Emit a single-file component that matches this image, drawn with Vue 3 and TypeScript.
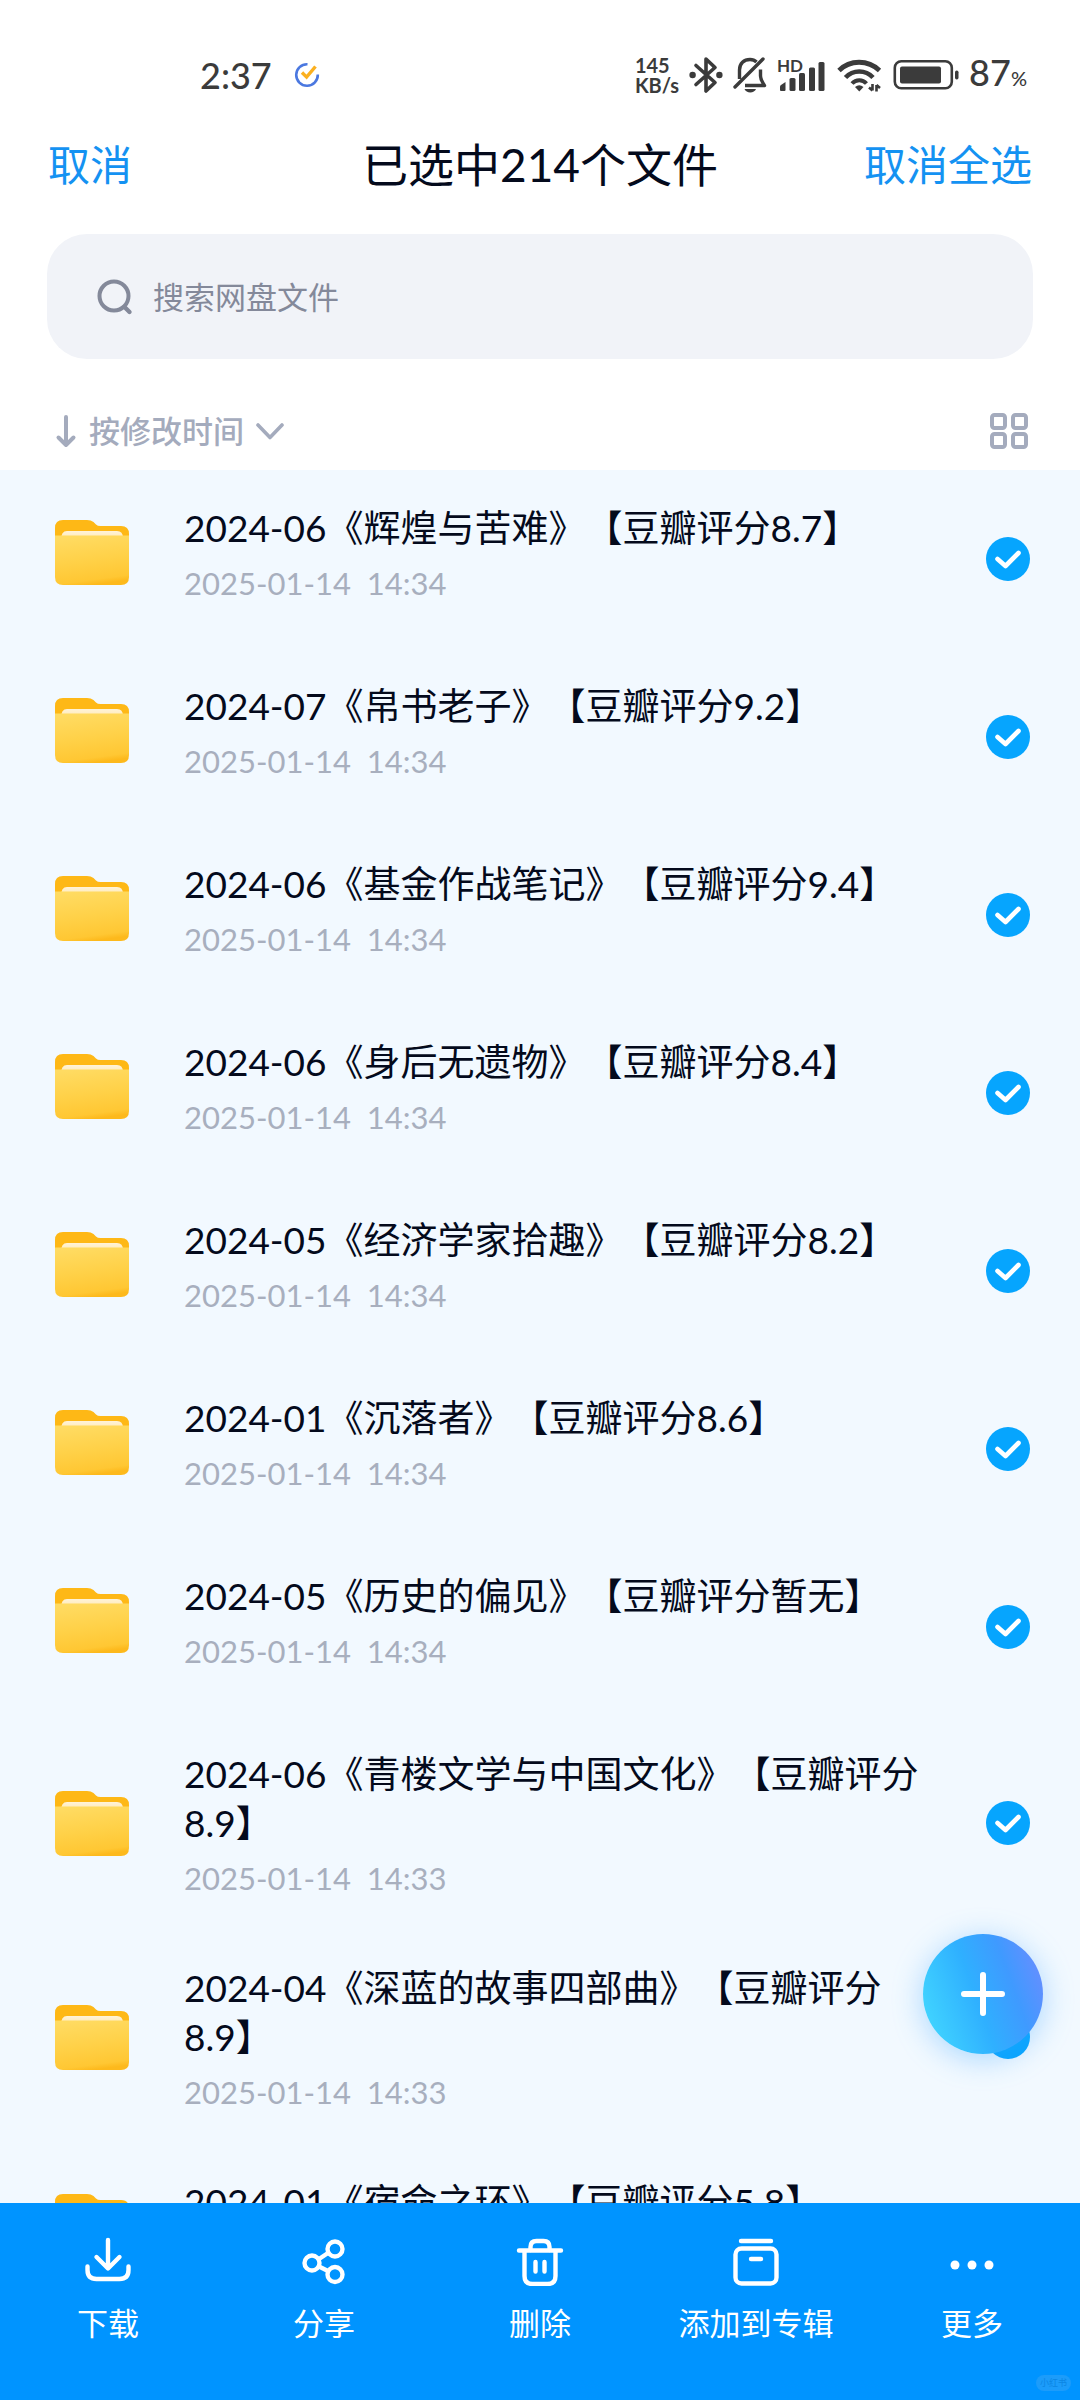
<script setup lang="ts">
import { computed, ref } from 'vue'

interface FileRow {
  id: number
  name: string
  time: string
  checked: boolean
}

const names: [string, string][] = [
  ['2024-06《辉煌与苦难》【豆瓣评分8.7】', '2025-01-14  14:34'],
  ['2024-07《帛书老子》【豆瓣评分9.2】', '2025-01-14  14:34'],
  ['2024-06《基金作战笔记》【豆瓣评分9.4】', '2025-01-14  14:34'],
  ['2024-06《身后无遗物》【豆瓣评分8.4】', '2025-01-14  14:34'],
  ['2024-05《经济学家拾趣》【豆瓣评分8.2】', '2025-01-14  14:34'],
  ['2024-01《沉落者》【豆瓣评分8.6】', '2025-01-14  14:34'],
  ['2024-05《历史的偏见》【豆瓣评分暂无】', '2025-01-14  14:34'],
  ['2024-06《青楼文学与中国文化》【豆瓣评分8.9】', '2025-01-14  14:33'],
  ['2024-04《深蓝的故事四部曲》【豆瓣评分8.9】', '2025-01-14  14:33'],
  ['2024-01《宿命之环》【豆瓣评分5.8】', '2025-01-14  14:33'],
]

const files = ref<FileRow[]>(
  names.map(([name, time], i) => ({ id: i + 1, name, time, checked: true })),
)
const keyword = ref('')

// Files selected further down the list that are not loaded yet
const selectedElsewhere = 204
const selectedCount = computed(
  () => selectedElsewhere + files.value.filter((f) => f.checked).length,
)
</script>

<template>
  <div class="screen">
    <header class="top">
      <div class="status">
        <span class="clock">2:37</span>
        <svg class="todo" width="26" height="26" viewBox="0 0 26 26" fill="none">
          <path d="M13.5 2.2A10.8 10.8 0 1 0 23.8 12.5" stroke="#4b78e0" stroke-width="2.6" />
          <path d="M8 10.5l4.6 4.6L21.5 4.5" stroke="#fbb01f" stroke-width="3.4" />
        </svg>
        <div class="status-right">
          <span class="speed">145<br />KB/s</span>
          <svg width="34" height="38" viewBox="0 0 34 38" fill="none">
            <path d="M7 9.5L26 26.5L17 35V3L26 11.5L7 28.5" stroke="#3b3b3b" stroke-width="3.6" stroke-linejoin="round" stroke-linecap="round" />
            <circle cx="3.6" cy="19" r="3.2" fill="#3b3b3b" />
            <circle cx="30.4" cy="19" r="3.2" fill="#3b3b3b" />
          </svg>
          <svg width="34" height="38" viewBox="0 0 34 38" fill="none" stroke="#3b3b3b" stroke-width="3.4">
            <path d="M2 31L30 3" stroke-linecap="round" />
            <path d="M6.5 23V14C6.5 7.5 11 3.5 17 3.5C20 3.5 22 4.5 23.5 6" />
            <path d="M27.5 13.5V20C27.5 24 29.5 26 31.5 29.5H12" stroke-linejoin="round" />
            <path d="M11.5 33H23C21.5 37.5 13 37.5 11.500 33z" fill="#3b3b3b" stroke="none" />
          </svg>
          <svg width="50" height="42" viewBox="0 -3 50 42" fill="#3b3b3b">
            <text x="0" y="15" class="hd">HD</text>
            <path d="M3 33V29.5Q3 28.7 4 28L8.5 25V33Q8.5 34 7.5 34H4Q3 34 3 33z" />
            <rect x="12.5" y="21" width="6" height="13" rx="1.5" />
            <rect x="22" y="16" width="6" height="18" rx="1.5" />
            <rect x="32" y="10.5" width="6" height="23.5" rx="1.5" />
            <rect x="41.5" y="5" width="6" height="29" rx="1.5" />
          </svg>
          <svg width="46" height="36" viewBox="0 0 46 36" fill="none" stroke="#3b3b3b">
            <path d="M2 13.5C13 2.5 31 2.5 42.5 13.5" stroke-width="4.8" />
            <path d="M8.5 20.5C16 12.5 28.5 12.5 36 20.5" stroke-width="4.6" />
            <path d="M15 26.5C19 22 25.5 22 29.5 26.5" stroke-width="4" />
            <path d="M18 30Q22.3 26.5 26.5 30L22.3 34.5z" fill="#3b3b3b" stroke="none" />
            <path d="M35.5 27V33.5M35.5 33.5L32 30.5M39.5 34.5V28M39.5 28L43 31" stroke-width="2.6" />
          </svg>
          <svg width="66" height="32" viewBox="0 0 66 32">
            <rect x="1.800" y="2.300" width="57" height="27" rx="6.500" fill="none" stroke="#3b3b3b" stroke-width="2.600" />
            <rect x="7" y="7.500" width="41" height="17" rx="2" fill="#3b3b3b" />
            <rect x="62" y="11.500" width="3.500" height="9" rx="1.700" fill="#3b3b3b" />
          </svg>
          <span class="level">87<small>%</small></span>
        </div>
      </div>

      <div class="nav">
        <button type="button" class="link">取消</button>
        <h1>已选中{{ selectedCount }}个文件</h1>
        <button type="button" class="link end">取消全选</button>
      </div>

      <label class="search">
        <svg width="36" height="38" viewBox="0 0 36 38" fill="none" stroke="#84899a">
          <circle cx="17" cy="18" r="14.5" stroke-width="4" />
          <path d="M27.5 29L32.5 34" stroke-width="4.4" stroke-linecap="round" />
        </svg>
        <input v-model="keyword" type="search" placeholder="搜索网盘文件" aria-label="搜索网盘文件" />
      </label>

      <div class="tools">
        <button type="button" class="sort">
          <svg width="22" height="34" viewBox="0 0 22 34" fill="none" stroke="#a4abbd" stroke-width="4" stroke-linecap="round" stroke-linejoin="round">
            <path d="M11 3V31M3.5 23.5L11 31L18.5 23.5" />
          </svg>
          <span>按修改时间</span>
          <svg width="28" height="20" viewBox="2 0 28 20" fill="none" stroke="#a4abbd" stroke-width="3.6" stroke-linecap="round" stroke-linejoin="round">
            <path d="M4 4L16 16.5L28 4" />
          </svg>
        </button>
        <button type="button" aria-label="宫格视图">
          <svg width="40" height="38" viewBox="0 0 40 38" fill="none" stroke="#a4abbd" stroke-width="4">
            <rect x="3" y="3" width="13" height="13" rx="2.5" />
            <rect x="24" y="3" width="13" height="13" rx="2.5" />
            <rect x="3" y="22" width="13" height="13" rx="2.5" />
            <rect x="24" y="22" width="13" height="13" rx="2.5" />
          </svg>
        </button>
      </div>
    </header>

    <svg class="defs" width="0" height="0" aria-hidden="true">
      <linearGradient id="front" x1="0.3" y1="0" x2="0.5" y2="1">
        <stop offset="0" stop-color="#ffdb62" />
        <stop offset="0.5" stop-color="#ffd148" />
        <stop offset="0.9" stop-color="#ffc733" />
        <stop offset="1" stop-color="#fdb91c" />
      </linearGradient>
      <linearGradient id="paper" x1="0" y1="0" x2="0" y2="1">
        <stop offset="0" stop-color="#fff3d8" />
        <stop offset="1" stop-color="#ffe29a" />
      </linearGradient>
    </svg>

    <main class="list">
      <ul>
        <li v-for="file in files" :key="file.id" class="row">
          <div class="info">
            <svg width="74" height="66" viewBox="0 0 74 66">
              <path d="M0 20V8Q0 0 8 0H32Q36 0 38.5 2L41 4.5Q42.5 6 45.5 6H66Q74 6 74 14V22H0z" fill="#feb816" />
              <path d="M6 20Q6 11 12 11H62Q68 11 68 18V24H6z" fill="url(#paper)" />
              <path d="M0 15.500H74V57Q74 65 66 65H8Q0 65 0 57z" fill="url(#front)" />
            </svg>
            <label class="text" :for="'file-' + file.id">
              <span class="name">{{ file.name }}</span>
              <span class="time">{{ file.time }}</span>
            </label>
          </div>
          <input :id="'file-' + file.id" v-model="file.checked" type="checkbox" class="check" />
        </li>
      </ul>
    </main>

    <button type="button" class="fab" aria-label="新建">
      <svg width="46" height="46" viewBox="0 0 46 46" stroke="#fff" stroke-width="6" stroke-linecap="round">
        <path d="M23 4V42M4 23H42" />
      </svg>
    </button>

    <footer class="actions">
      <button type="button">
        <svg width="52" height="52" viewBox="0 0 52 52">
          <path d="M26 6V34M14.5 23L26 34.5L37.5 23" />
          <path d="M5.5 32.5V36Q5.5 45 14.5 45H37.5Q46.5 45 46.5 36V32.5" />
        </svg>
        <span>下载</span>
      </button>
      <button type="button">
        <svg width="52" height="52" viewBox="0 0 52 52">
          <circle cx="14" cy="29" r="7.5" />
          <circle cx="37" cy="15" r="7.5" />
          <circle cx="37" cy="40.5" r="7.5" />
          <path d="M21 25L30 19M21 32.5L30 37" />
        </svg>
        <span>分享</span>
      </button>
      <button type="button">
        <svg width="52" height="52" viewBox="0 0 52 52">
          <path d="M5 16.5H47M10.5 17V42Q10.500 50 18.5 50H33.5Q41.500 50 41.5 42V17" />
          <path d="M16.5 16V13Q16.5 7 22.5 7H29.5Q35.5 7 35.5 13V16M21.5 28V37.500M30.5 28V37.5" />
        </svg>
        <span>删除</span>
      </button>
      <button type="button">
        <svg width="52" height="52" viewBox="0 0 52 52">
          <path d="M11 7H41M21 25H31" />
          <rect x="5.5" y="14.5" width="41" height="35" rx="6" />
        </svg>
        <span>添加到专辑</span>
      </button>
      <button type="button">
        <svg width="52" height="52" viewBox="0 0 52 52" class="dots">
          <circle cx="9" cy="31" r="4.5" />
          <circle cx="26" cy="31" r="4.5" />
          <circle cx="43" cy="31" r="4.5" />
        </svg>
        <span>更多</span>
      </button>
      <small class="mark">小红书</small>
    </footer>
  </div>
</template>

<style>
body {
  margin: 0;
}
</style>

<style scoped>
.screen {
  position: relative;
  display: flex;
  flex-direction: column;
  height: 100vh;
  overflow: hidden;
  background: #fff;
  color: #040a1c;
  font-family: Lato, "Noto Sans CJK SC", sans-serif;
  text-spacing-trim: space-all;
}
button {
  margin: 0;
  padding: 0;
  border: 0;
  background: none;
  color: inherit;
  font: inherit;
  cursor: pointer;
}
svg {
  display: block;
  flex: none;
}
.defs {
  position: absolute;
}

.status {
  display: flex;
  align-items: center;
  height: 54px;
  padding: 48px 53px 0 200px;
  color: #3b3b3b;
}
.clock,
.level {
  font-size: 36px;
  line-height: 48px;
  font-weight: 500;
}
.todo {
  margin-left: 22px;
}
.status-right {
  display: flex;
  align-items: center;
  gap: 10px;
  margin-left: auto;
}
.speed {
  font-size: 20px;
  line-height: 20px;
  font-weight: 700;
}
.hd {
  font-size: 17px;
  font-weight: 700;
}
.level small {
  font-size: 20px;
}

.nav {
  display: grid;
  grid-template-columns: 1fr auto 1fr;
  align-items: center;
  height: 126px;
  padding: 0 48px;
}
.nav h1 {
  margin: 0;
  font-size: 46px;
  line-height: 64px;
  font-weight: 400;
}
.link {
  justify-self: start;
  color: #1492f2;
  font-size: 42px;
  line-height: 64px;
}
.link.end {
  justify-self: end;
}

.search {
  display: flex;
  align-items: center;
  gap: 20px;
  height: 125px;
  margin: 6px 47px 0;
  padding: 0 50px;
  box-sizing: border-box;
  border-radius: 40px;
  background: #f1f3f8;
}
.search input {
  flex: 1;
  min-width: 0;
  padding: 0;
  border: 0;
  outline: 0;
  background: none;
  color: inherit;
  font: inherit;
  font-size: 31px;
  line-height: 44px;
}
.search input::placeholder {
  color: #84899a;
  opacity: 1;
}

.tools {
  display: flex;
  align-items: center;
  justify-content: space-between;
  height: 111px;
  padding: 32px 51px 0 55px;
  box-sizing: border-box;
}
.sort {
  display: flex;
  align-items: center;
  gap: 12px;
  color: #a4abbd;
  font-size: 31px;
  line-height: 44px;
  font-weight: 500;
}

.list {
  flex: 1;
  min-height: 0;
  overflow: hidden;
  background: #f2f9ff;
}
.list ul {
  margin: 0;
  padding: 0;
  list-style: none;
}
.row {
  display: flex;
  align-items: center;
  min-height: 178px;
  padding: 0 50px 0 55px;
  box-sizing: border-box;
}
.info {
  display: flex;
  flex: 1;
  align-items: center;
  align-self: flex-start;
  gap: 55px;
  padding: 33px 52px 32px 0;
}
.text {
  display: flex;
  flex: 1;
  flex-direction: column;
  gap: 11px;
}
.name {
  font-size: 37px;
  line-height: 49px;
}
.time {
  color: #a8afbe;
  font-size: 31px;
  line-height: 40px;
  white-space: pre;
}
.check {
  flex: none;
  width: 44px;
  height: 44px;
  margin: 0;
  border: 3px solid #c8cedb;
  border-radius: 50%;
  appearance: none;
}
.check:checked {
  border: 0;
  background: #06a5fe url("data:image/svg+xml,%3Csvg xmlns='http://www.w3.org/2000/svg' viewBox='0 0 44 44'%3E%3Cpath d='M11.5 22L19.5 29L32.5 16' fill='none' stroke='white' stroke-width='4.6' stroke-linecap='round' stroke-linejoin='round'/%3E%3C/svg%3E") center / contain;
}

.fab {
  position: absolute;
  right: 37px;
  bottom: 346px;
  display: grid;
  place-items: center;
  width: 120px;
  height: 120px;
  border-radius: 50%;
  background: linear-gradient(70deg, #41d5ff 8%, #2fb0ff 45%, #3f9aff 70%, #6d8cff 96%);
  box-shadow: 0 5px 30px rgba(60, 165, 255, 0.4);
}

.actions {
  position: relative;
  display: flex;
  height: 197px;
  background: #0094ff;
  color: #fff;
}
.actions button {
  display: flex;
  flex: 1;
  flex-direction: column;
  align-items: center;
  gap: 15px;
  padding-top: 31px;
  font-size: 31px;
  line-height: 44px;
}
.actions svg {
  fill: none;
  stroke: #fff;
  stroke-width: 4.4;
  stroke-linecap: round;
  stroke-linejoin: round;
}
.actions .dots {
  fill: #fff;
  stroke: none;
}
.mark {
  position: absolute;
  right: 9px;
  bottom: 9px;
  padding: 0 4px;
  border-radius: 8px;
  background: #1c9cfa;
  color: #0b86e4;
  font-size: 9px;
  line-height: 16px;
}
</style>
